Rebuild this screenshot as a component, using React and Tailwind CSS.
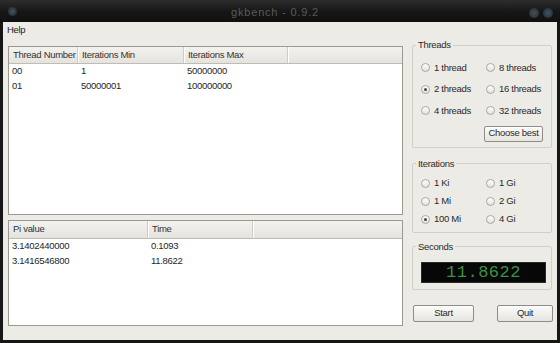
import React from "react";

const threadOpts = [
  ["1 thread", false],
  ["8 threads", false],
  ["2 threads", true],
  ["16 threads", false],
  ["4 threads", false],
  ["32 threads", false],
];

const iterOpts = [
  ["1 Ki", false],
  ["1 Gi", false],
  ["1 Mi", false],
  ["2 Gi", false],
  ["100 Mi", true],
  ["4 Gi", false],
];

function Radio({ label, checked }) {
  return (
    <div className="flex items-center gap-[4px] whitespace-nowrap">
      <span className="w-[9px] h-[9px] rounded-full border border-[#aaa79f] bg-linear-to-b from-[#ffffff] to-[#e4e2dc] flex items-center justify-center shrink-0">
        {checked && <span className="w-[3px] h-[3px] rounded-full bg-[#444]" />}
      </span>
      <span>{label}</span>
    </div>
  );
}

function Frame({ title, className = "", children }) {
  return (
    <fieldset className={`border border-[#d2cfc8] rounded-[2px] ${className}`}>
      <legend className="ml-[3px] px-[2px] leading-[12px] text-[#2a2a2a] whitespace-nowrap">{title}</legend>
      {children}
    </fieldset>
  );
}

function Button({ children, className = "" }) {
  return (
    <div
      className={`flex items-center justify-center whitespace-nowrap border border-[#8f8c86] rounded-[2px] bg-linear-to-b from-[#fbfbfa] to-[#e6e4df] shadow-[inset_0_1px_0_#fff] ${className}`}
    >
      {children}
    </div>
  );
}

function Table({ cols, rows, headerH, className = "" }) {
  return (
    <div className={`border border-[#9c9993] bg-white flex flex-col ${className}`}>
      <div
        className="flex bg-linear-to-b from-[#f3f2ef] to-[#e5e3de] border-b border-[#bfbcb5] shrink-0"
        style={{ height: headerH }}
      >
        {cols.map((c, i) => (
          <div
            key={i}
            className="flex items-center pl-[4px] whitespace-nowrap border-r border-[#cfccc5] shadow-[1px_0_0_#fff] text-[#333]"
            style={{ width: c.w }}
          >
            {c.label}
          </div>
        ))}
        <div className="flex-1" />
      </div>
      {rows.map((r, i) => (
        <div key={i} className="flex h-[14.5px] items-center text-[#262626] whitespace-nowrap">
          {r.map((v, j) => (
            <div key={j} className="pl-[3px]" style={{ width: cols[j].w }}>
              {v}
            </div>
          ))}
        </div>
      ))}
    </div>
  );
}

export default function App() {
  return (
    <div
      className="w-[560px] h-[343px] bg-[#161616] flex flex-col overflow-hidden text-[9.5px] tracking-[-0.3px]"
      style={{ fontFamily: '"Liberation Sans", Arial, sans-serif' }}
    >
      <div className="h-[22px] shrink-0 relative bg-linear-to-b from-[#2e2e2e] via-[#171717] to-[#101010] flex items-center justify-center">
        <span className="absolute left-[8px] top-[7px] w-[9px] h-[9px] rounded-full bg-radial from-[#46525c] to-[#1e262c]" />
        <span className="text-[11px] tracking-[0.8px] text-[#5a5a5a] -ml-[10px] mt-[2px]">gkbench - 0.9.2</span>
        <span className="absolute right-[21px] top-[8px] w-[10px] h-[10px] rounded-full bg-radial from-[#4a4f55] to-[#24282c]" />
        <span className="absolute right-[7px] top-[8px] w-[10px] h-[10px] rounded-full bg-radial from-[#3f5562] to-[#1f2a31]" />
      </div>

      <div className="flex-1 mx-[3px] mb-[3px] bg-[#edebe6] flex flex-col">
        <div className="h-[16px] flex items-center pl-[4px] text-[#222] shrink-0">Help</div>

        <div className="flex flex-1 pl-[5px] pr-[4px]">
          <div className="w-[395px] pt-[8px] flex flex-col gap-[5px]">
            <Table
              className="h-[169px]"
              headerH={17}
              cols={[
                { label: "Thread Number", w: 69 },
                { label: "Iterations Min", w: 106 },
                { label: "Iterations Max", w: 104 },
              ]}
              rows={[
                ["00", "1", "50000000"],
                ["01", "50000001", "100000000"],
              ]}
            />
            <Table
              className="h-[106px]"
              headerH={18}
              cols={[
                { label: "Pi value", w: 139 },
                { label: "Time", w: 105 },
              ]}
              rows={[
                ["3.1402440000", "0.1093"],
                ["3.1416546800", "11.8622"],
              ]}
            />
          </div>

          <div className="ml-[9px] w-[141px] flex flex-col text-[#2a2a2a]">
            <Frame title="Threads" className="mt-[1px] w-[140px]">
              <div className="pl-[8px] pr-[8px] pt-[6px] pb-[5px]">
                <div className="grid grid-cols-[65px_1fr] auto-rows-[21.5px] items-center">
                  {threadOpts.map(([l, c]) => (
                    <Radio key={l} label={l} checked={c} />
                  ))}
                </div>
                <div className="flex justify-end mt-[4px]">
                  <Button className="w-[59px] h-[16px]">Choose best</Button>
                </div>
              </div>
            </Frame>

            <Frame title="Iterations" className="mt-[10px] w-[140px]">
              <div className="pl-[8px] pr-[4px] pt-[5px] pb-[3px]">
                <div className="grid grid-cols-[65px_1fr] auto-rows-[18px] items-center">
                  {iterOpts.map(([l, c]) => (
                    <Radio key={l} label={l} checked={c} />
                  ))}
                </div>
              </div>
            </Frame>

            <Frame title="Seconds" className="mt-[8px] w-[140px]">
              <div className="pl-[8px] pr-[5px] pt-[9px] pb-[6px]">
                <div className="h-[21px] bg-[#070707] border border-[#2a2a2a] flex items-center justify-center">
                  <span
                    className="text-[17px] tracking-[0.5px] text-[#3c9142] leading-none"
                    style={{ fontFamily: '"Liberation Mono", "DejaVu Sans Mono", monospace' }}
                  >
                    11.8622
                  </span>
                </div>
              </div>
            </Frame>

            <div className="flex justify-between mt-[15px]">
              <Button className="ml-[1px] w-[61px] h-[17px]">Start</Button>
              <Button className="w-[56px] h-[17px]">Quit</Button>
            </div>
          </div>
        </div>
      </div>
    </div>
  );
}
